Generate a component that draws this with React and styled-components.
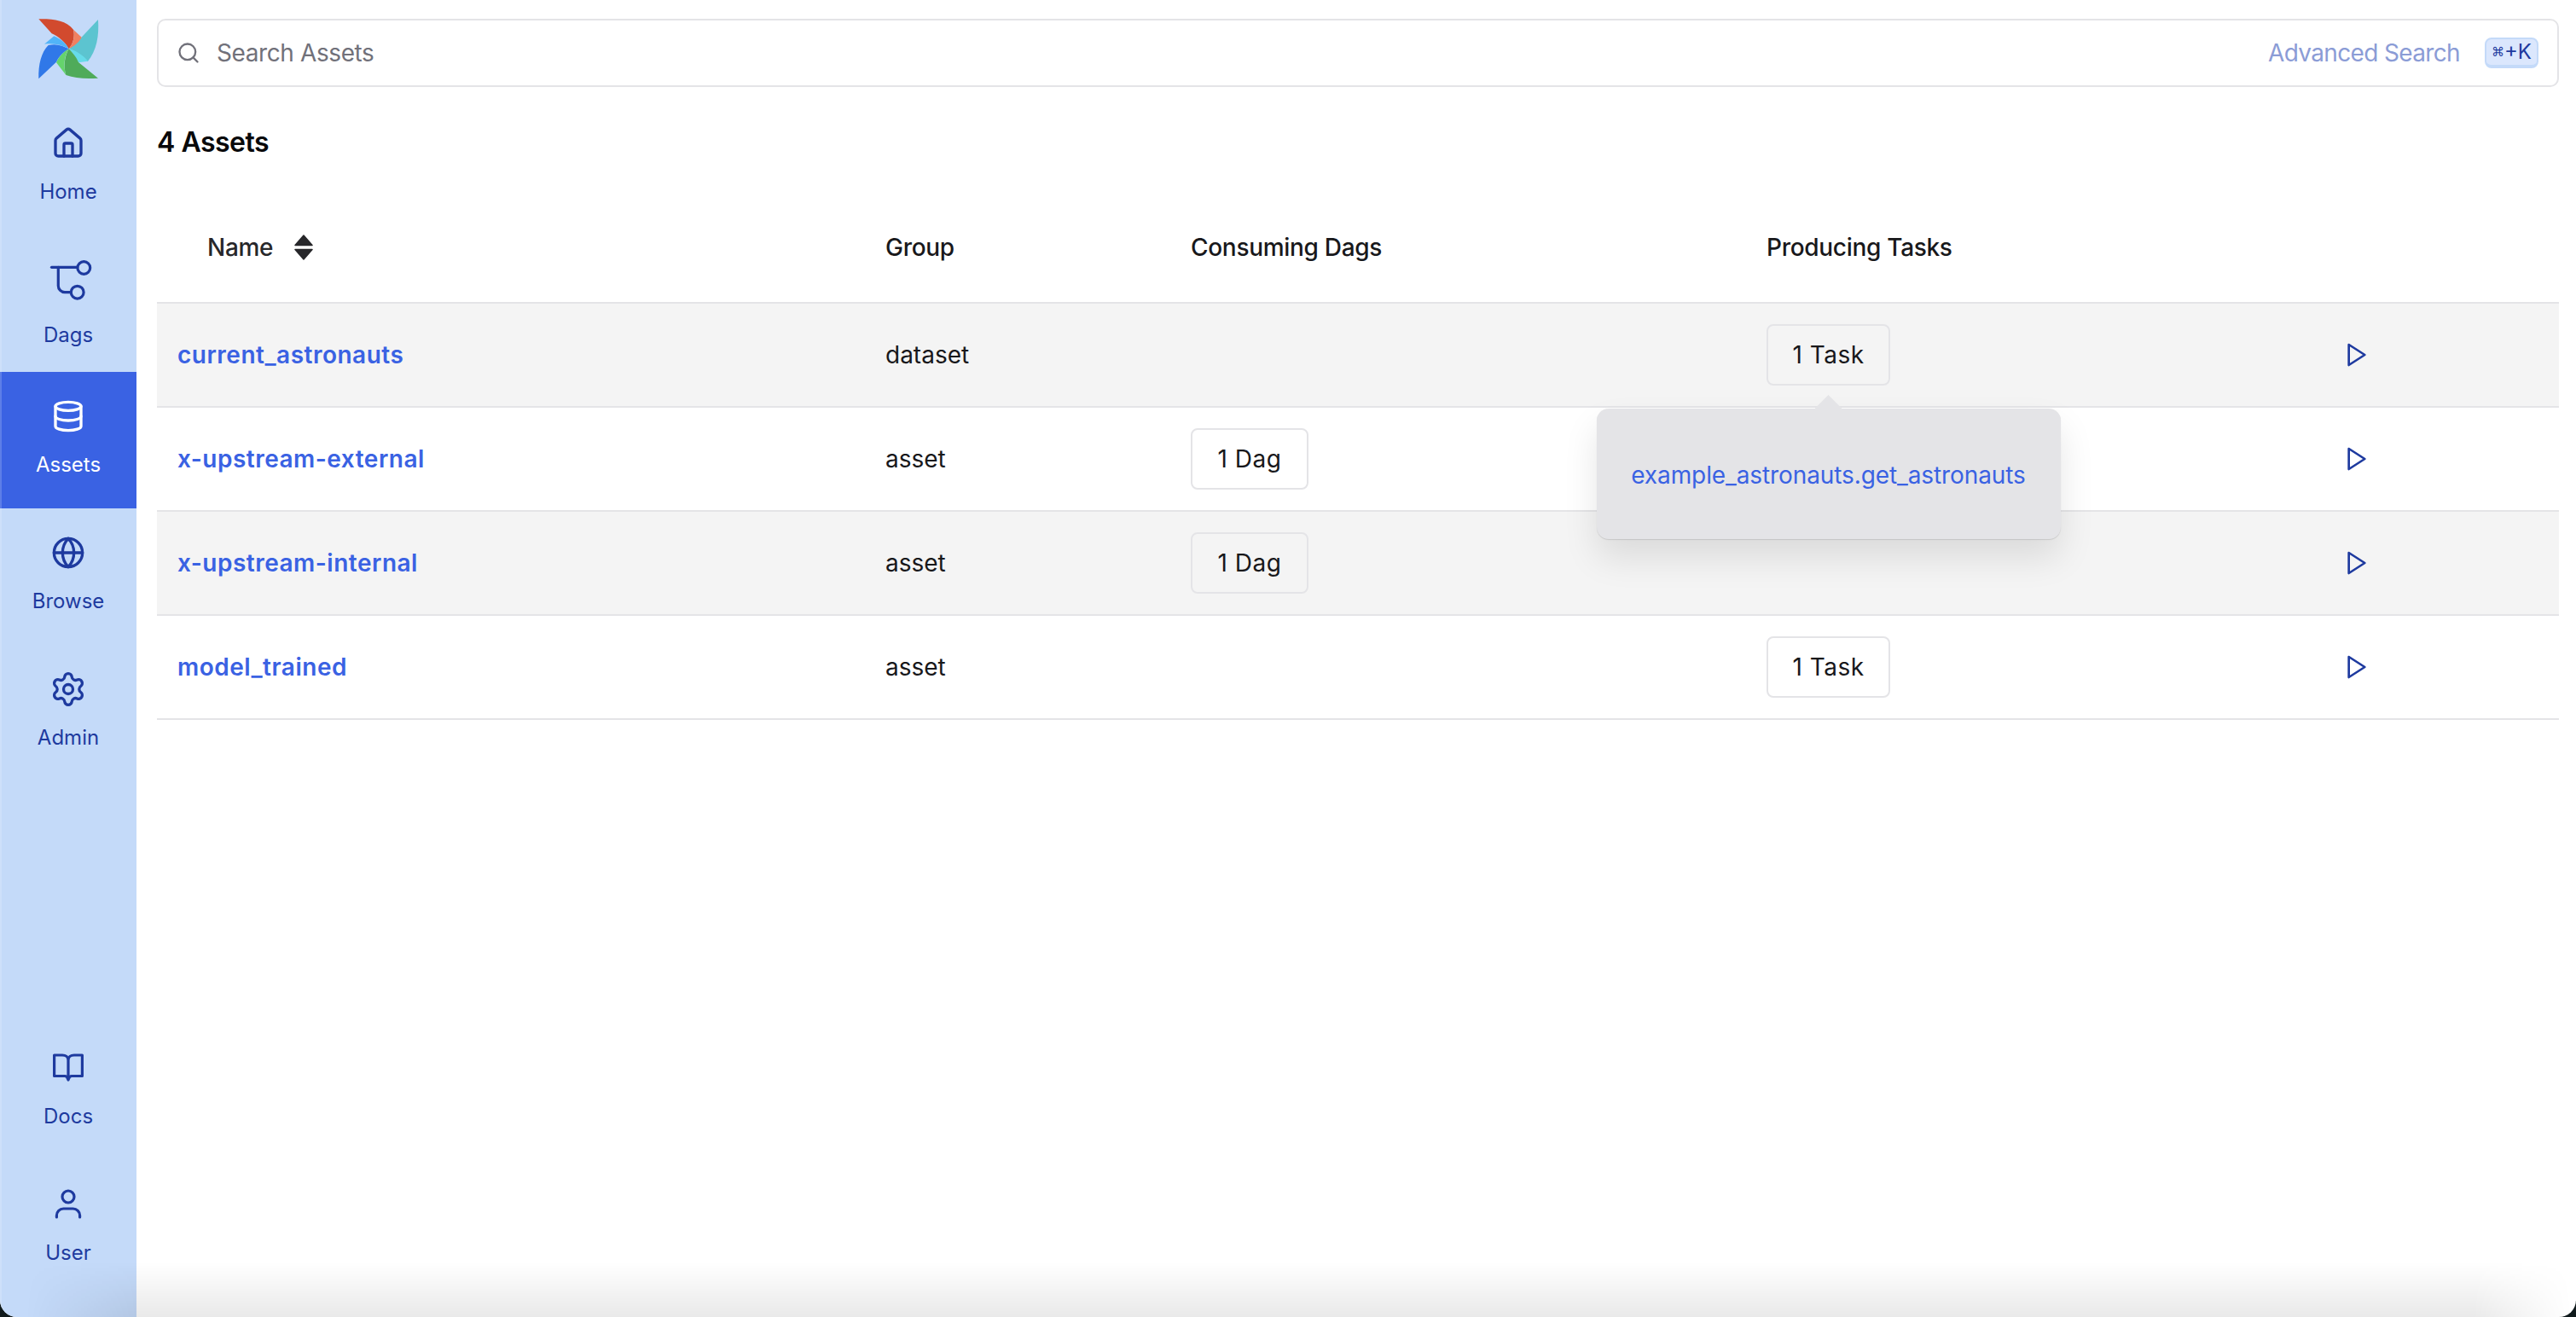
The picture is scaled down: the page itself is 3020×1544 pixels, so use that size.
import styled, { createGlobalStyle } from "styled-components"
import { Database, Globe, House, Search, Settings } from "lucide-react"
import { FiPlay } from "react-icons/fi"

const GlobalStyle = createGlobalStyle`
    html, body {
        margin: 0;
        padding: 0;
        background: #101a1c;
    }
    * {
        box-sizing: border-box;
    }
`

const Shell = styled.div`
    position: relative;
    width: 3020px;
    height: 1544px;
    display: flex;
    overflow: hidden;
    background: #fff;
    border-radius: 0 0 20px 20px;
    font-family: Inter, "Liberation Sans", sans-serif;
    color: #09090b;
`

const BottomFade = styled.div`
    position: absolute;
    left: 0;
    right: 0;
    bottom: 0;
    height: 64px;
    pointer-events: none;
    background: linear-gradient(to top, rgba(0, 0, 0, 0.085), rgba(0, 0, 0, 0));
    mask-image: linear-gradient(to right, transparent 30px, black 160px, black 2900px, transparent 3015px);
`

const Sidebar = styled.nav`
    position: relative;
    width: 160px;
    flex: none;
    display: flex;
    flex-direction: column;
    padding-bottom: 24px;
    background: #c4daf9;

    &::before {
        content: "";
        position: absolute;
        top: 0;
        bottom: 0;
        left: 0;
        width: 2px;
        background: rgba(255, 255, 255, 0.18);
    }
`

const LogoBox = styled.div`
    height: 116px;
    padding-top: 14px;
    display: flex;
    justify-content: center;
`

const NavItem = styled.a`
    height: 160px;
    display: flex;
    flex-direction: column;
    align-items: center;
    padding-top: 32px;
    gap: ${(props) => (props.$tall ? "29px" : "21px")};
    font-size: 24px;
    line-height: 32px;
    font-weight: 400;
    color: ${(props) => (props.$active ? "#fff" : "#1e3a9f")};
    background: ${(props) => (props.$active ? "#3a62e3" : "transparent")};

    svg {
        display: block;
        overflow: visible;
    }
`

const GearIcon = styled(Settings)`
    margin: -2px;
`

const NavBottom = styled.div`
    margin-top: auto;
`

const Main = styled.main`
    flex: 1;
    min-width: 0;
    padding: 22px 20px 0 24px;
`

const SearchBar = styled.div`
    height: 80px;
    display: flex;
    align-items: center;
    gap: 19px;
    padding: 0 22px 0 21px;
    border: 2px solid #e4e4e7;
    border-radius: 10px;
    background: #fff;
    font-size: 28px;
    color: #71717a;

    svg {
        flex: none;
    }
`

const Placeholder = styled.span`
    letter-spacing: -0.4px;
`

const AdvancedLink = styled.span`
    margin-left: auto;
    letter-spacing: -0.65px;
    color: #8b9cd6;
`

const Kbd = styled.kbd`
    height: 36px;
    width: 63px;
    margin-left: 10px;
    display: flex;
    align-items: center;
    justify-content: center;
    border: 2px solid #c4daf9;
    border-bottom-width: 4px;
    border-radius: 8px;
    background: #dbe7fd;
    color: #1e3a9f;
    font-family: Inter, "DejaVu Sans", sans-serif;
    font-size: 24px;
    line-height: 1;

    span {
        font-family: "DejaVu Sans", sans-serif;
        font-size: 15px;
    }
`

const Heading = styled.h2`
    margin: 45px 0 0;
    font-size: 32px;
    line-height: 40px;
    font-weight: 600;
    letter-spacing: -0.5px;
`

const Table = styled.div`
    margin-top: 39px;
`

const Row = styled.div`
    display: grid;
    grid-template-columns: 830px 358px 675px 676px 1fr;
    align-items: center;
    height: ${(props) => (props.$head ? "130px" : "122px")};
    border-bottom: 2px solid #e4e4e7;
    font-size: 28px;
    color: #18181b;
    background: ${(props) => (props.$striped ? "#f4f4f4" : "transparent")};
`

const Cell = styled.div`
    padding: 0 24px;
`

const HeadCell = styled(Cell)`
    font-weight: 500;
    letter-spacing: -0.3px;
`

const NameHead = styled(HeadCell)`
    display: flex;
    align-items: center;
    gap: 25px;
    padding-left: 59px;
    color: #27272a;

    svg {
        display: block;
    }
`

const AssetLink = styled.a`
    font-weight: 600;
    letter-spacing: 0.5px;
    color: #3a62e3;
`

const Anchor = styled.div`
    position: relative;
    display: inline-block;
    vertical-align: middle;
`

const CountButton = styled.button`
    display: block;
    width: ${(props) => props.$width};
    height: 72px;
    padding: 0;
    border: 2px solid #e4e4e7;
    border-radius: 8px;
    background: transparent;
    font: 400 28px Inter, "Liberation Sans", sans-serif;
    letter-spacing: 0.5px;
    color: #18181b;
`

const Popover = styled.div`
    position: absolute;
    z-index: 2;
    top: 100%;
    left: 50%;
    width: 544px;
    height: 153px;
    margin-top: 27px;
    transform: translateX(-50%);
    display: flex;
    align-items: center;
    justify-content: center;
    padding-top: 3px;
    border-radius: 14px;
    background: #e4e4e7;
    box-shadow: 0 1px 1px rgba(0, 0, 0, 0.12), 0 22px 40px rgba(0, 0, 0, 0.1);
    font-size: 28px;
    letter-spacing: -0.1px;
    color: #3a62e3;
    white-space: nowrap;

    &::before {
        content: "";
        position: absolute;
        top: -16px;
        left: 50%;
        width: 32px;
        height: 16px;
        margin-left: -16px;
        background: #e4e4e7;
        clip-path: polygon(50% 0, 100% 100%, 0 100%);
    }
`

const PlayButton = styled.span`
    display: block;
    color: #1e3a9f;

    svg {
        display: block;
    }
`

const assets = [
    { name: "current_astronauts", group: "dataset", tasks: "1 Task", open: true },
    { name: "x-upstream-external", group: "asset", dags: "1 Dag" },
    { name: "x-upstream-internal", group: "asset", dags: "1 Dag" },
    { name: "model_trained", group: "asset", tasks: "1 Task" },
]

function Logo() {
    return (
        <svg width="88" height="88" viewBox="0 0 264 264">
            <path fill="#d24a2e" d="M28 25C80 24 125 30 150 62C156 85 150 110 134 130C120 105 100 88 74 76Z" />
            <path fill="#f08060" d="M150 62L180 90C172 110 152 125 134 130C150 110 156 85 150 62Z" />
            <path fill="#5cc4d0" d="M237 27C241 85 232 135 200 175C180 152 158 138 134 130C150 122 170 108 180 88Z" />
            <path fill="#66dbe9" d="M134 130C160 135 182 152 202 173L168 178C158 158 146 142 134 130Z" />
            <path fill="#4fab5a" d="M237 233C190 236 155 233 124 222C114 190 120 155 134 130C146 142 160 158 168 177Z" />
            <path fill="#65d46c" d="M134 130C118 155 114 190 124 222L90 178C100 155 116 140 134 130Z" />
            <path fill="#3078e8" d="M28 235C26 185 38 140 62 117C88 110 114 118 134 130C116 140 100 155 90 176Z" />
            <path fill="#52b4f8" d="M48 113L82 85C104 94 124 110 134 130C110 116 80 109 48 113Z" />
        </svg>
    )
}

function DagsIcon() {
    return (
        <svg width="40" height="40" viewBox="0 0 40 40" fill="none" stroke="currentColor" strokeWidth="3.2" strokeLinecap="round">
            <path d="M0.5 5.3H30.5" />
            <circle cx="38.3" cy="6" r="7.4" />
            <path d="M8.3 5.3V27a7.7 7.7 0 0 0 7.7 7.7H23" />
            <circle cx="30.7" cy="34.7" r="7.4" />
        </svg>
    )
}

function DocsIcon() {
    return (
        <svg width="40" height="40" viewBox="0 0 40 40" fill="none" stroke="currentColor" strokeWidth="3.2" strokeLinejoin="round">
            <path d="M20 11C20 7 17 5 13 5H3.6V29.5H16C18 29.5 19 31 20 34C21 31 22 29.5 24 29.5H36.4V5H27C23 5 20 7 20 11V33" />
        </svg>
    )
}

function UserIcon() {
    return (
        <svg width="40" height="40" viewBox="0 0 40 40" fill="none" stroke="currentColor" strokeWidth="3.2" strokeLinecap="round">
            <circle cx="20" cy="11" r="7" />
            <path d="M6.4 35V33a8 8 0 0 1 8-8h11.2a8 8 0 0 1 8 8v2" />
        </svg>
    )
}

function SortIcon() {
    return (
        <svg width="22" height="30" viewBox="0 0 22 30" fill="#27272a" stroke="#27272a" strokeWidth="1.5" strokeLinejoin="round">
            <path d="M11 1L21 12.5H1Z" />
            <path d="M11 29L21 17.5H1Z" />
        </svg>
    )
}

export default function App() {
    return (
        <Shell>
            <GlobalStyle />
            <Sidebar>
                <LogoBox>
                    <Logo />
                </LogoBox>
                <NavItem>
                    <House size={40} />
                    Home
                </NavItem>
                <NavItem $tall>
                    <DagsIcon />
                    Dags
                </NavItem>
                <NavItem $active>
                    <Database size={40} />
                    Assets
                </NavItem>
                <NavItem>
                    <Globe size={40} />
                    Browse
                </NavItem>
                <NavItem>
                    <GearIcon size={44} strokeWidth={1.8} />
                    Admin
                </NavItem>
                <NavBottom>
                    <NavItem>
                        <DocsIcon />
                        Docs
                    </NavItem>
                    <NavItem>
                        <UserIcon />
                        User
                    </NavItem>
                </NavBottom>
            </Sidebar>
            <Main>
                <SearchBar>
                    <Search size={28} />
                    <Placeholder>Search Assets</Placeholder>
                    <AdvancedLink>Advanced Search</AdvancedLink>
                    <Kbd>
                        <span>⌘</span>+K
                    </Kbd>
                </SearchBar>
                <Heading>4 Assets</Heading>
                <Table>
                    <Row $head>
                        <NameHead>
                            Name
                            <SortIcon />
                        </NameHead>
                        <HeadCell>Group</HeadCell>
                        <HeadCell>Consuming Dags</HeadCell>
                        <HeadCell>Producing Tasks</HeadCell>
                        <HeadCell />
                    </Row>
                    {assets.map((asset, index) => (
                        <Row key={asset.name} $striped={index % 2 === 0}>
                            <Cell>
                                <AssetLink>{asset.name}</AssetLink>
                            </Cell>
                            <Cell>{asset.group}</Cell>
                            <Cell>{asset.dags && <CountButton $width="138px">{asset.dags}</CountButton>}</Cell>
                            <Cell>
                                {asset.tasks && (
                                    <Anchor>
                                        <CountButton $width="145px">{asset.tasks}</CountButton>
                                        {asset.open && <Popover>example_astronauts.get_astronauts</Popover>}
                                    </Anchor>
                                )}
                            </Cell>
                            <Cell>
                                <PlayButton>
                                    <FiPlay size={32} />
                                </PlayButton>
                            </Cell>
                        </Row>
                    ))}
                </Table>
            </Main>
            <BottomFade />
        </Shell>
    )
}
